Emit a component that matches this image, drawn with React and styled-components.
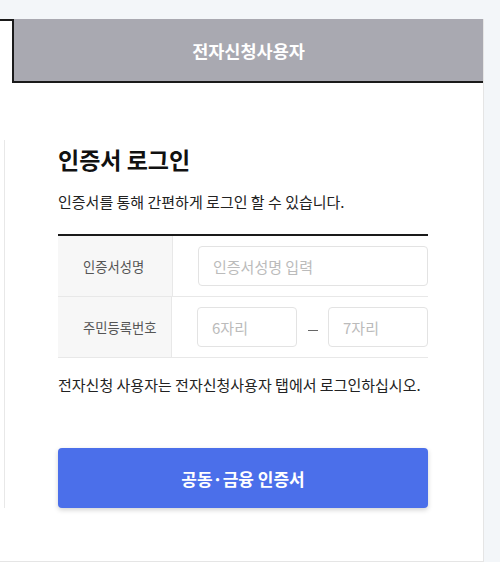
import React from "react";
import styled, { createGlobalStyle } from "styled-components";

const GlobalStyle = createGlobalStyle`
  body {
    margin: 0;
    background: #ffffff;
    font-family: "Noto Sans CJK KR", "Noto Sans", sans-serif;
    color: #222;
  }
`;

export default function App() {
  return (
    <>
      <GlobalStyle />
      <Page>
        <Panel>
          <Tabs>
            <Tab active />
            <Tab>전자신청사용자</Tab>
          </Tabs>
          <Body>
            <Content>
              <Title>인증서 로그인</Title>
              <Desc>인증서를 통해 간편하게 로그인 할 수 있습니다.</Desc>
              <Table>
                <Row>
                  <Label>인증서성명</Label>
                  <Field>
                    <Input placeholder="인증서성명 입력" />
                  </Field>
                </Row>
                <Row>
                  <Label>주민등록번호</Label>
                  <Field>
                    <Input placeholder="6자리" small />
                    <Dash />
                    <Input placeholder="7자리" small />
                  </Field>
                </Row>
              </Table>
              <Note>전자신청 사용자는 전자신청사용자 탭에서 로그인하십시오.</Note>
              <Button type="button">공동·금융 인증서</Button>
            </Content>
          </Body>
        </Panel>
      </Page>
    </>
  );
}

const Page = styled.div`
  background: #f3f6f9;
  padding: 19px 16px 0 0;
`;

const Panel = styled.div`
  width: 484px;
  box-sizing: border-box;
  background: #fff;
  border-right: 1px solid #e5e5e5;
  border-bottom: 1px solid #e5e5e5;
  padding-bottom: 53px;
`;

const Tabs = styled.div`
  display: flex;
  height: 64px;
`;

const Tab = styled.div`
  box-sizing: border-box;
  height: 64px;
  display: flex;
  align-items: center;
  justify-content: center;
  font-size: 17.5px;
  font-weight: 700;
  ${({ active }) =>
    active
      ? `
    width: 14px;
    background: #fff;
    border-top: 2px solid #1a1a1a;
    border-right: 2px solid #1a1a1a;
  `
      : `
    flex: 1;
    background: #a9a9b1;
    color: #fff;
    border-bottom: 2px solid #1a1a1a;
  `}
`;

const Body = styled.div`
  padding: 57px 0 0 4px;
`;

const Content = styled.div`
  border-left: 1px solid #e8e8e8;
  padding-left: 53px;
  width: 370px;
  display: flex;
  flex-direction: column;
`;

const Title = styled.h2`
  margin: 0;
  font-size: 23px;
  font-weight: 700;
  line-height: 38px;
  color: #111;
`;

const Desc = styled.p`
  margin: 14px 0 0;
  font-size: 15px;
  line-height: 20px;
  color: #222;
`;

const Table = styled.div`
  margin-top: 22px;
  border-top: 2px solid #1a1a1a;
`;

const Row = styled.div`
  display: flex;
  height: 61px;
  box-sizing: border-box;
  border-bottom: 1px solid #e8e8e8;
`;

const Label = styled.div`
  width: 115px;
  box-sizing: border-box;
  background: #f7f7f7;
  border-right: 1px solid #e8e8e8;
  padding-left: 25px;
  display: flex;
  align-items: center;
  font-size: 13.3px;
  color: #555;
`;

const Field = styled.div`
  flex: 1;
  display: flex;
  align-items: center;
  padding-left: 25px;
`;

const Input = styled.input`
  box-sizing: border-box;
  height: 40px;
  width: ${({ small }) => (small ? "100px" : "100%")};
  border: 1px solid #e3e3e3;
  border-radius: 4px;
  padding: 0 14px;
  font-family: inherit;
  font-size: 15px;
  color: #222;
  outline: none;
  &::placeholder {
    color: #bbb;
  }
`;

const Dash = styled.span`
  width: 10px;
  height: 1px;
  margin: 6px 10px 0 11px;
  background: #666;
`;

const Note = styled.p`
  margin: 17px 0 0;
  font-size: 15px;
  line-height: 20px;
  color: #222;
`;

const Button = styled.button`
  margin-top: 53px;
  height: 60px;
  border: none;
  border-radius: 4px;
  background: #4b6fea;
  color: #fff;
  font-family: inherit;
  font-size: 17px;
  font-weight: 700;
  box-shadow: 0 2px 5px rgba(0, 0, 0, 0.18);
  cursor: pointer;
`;
